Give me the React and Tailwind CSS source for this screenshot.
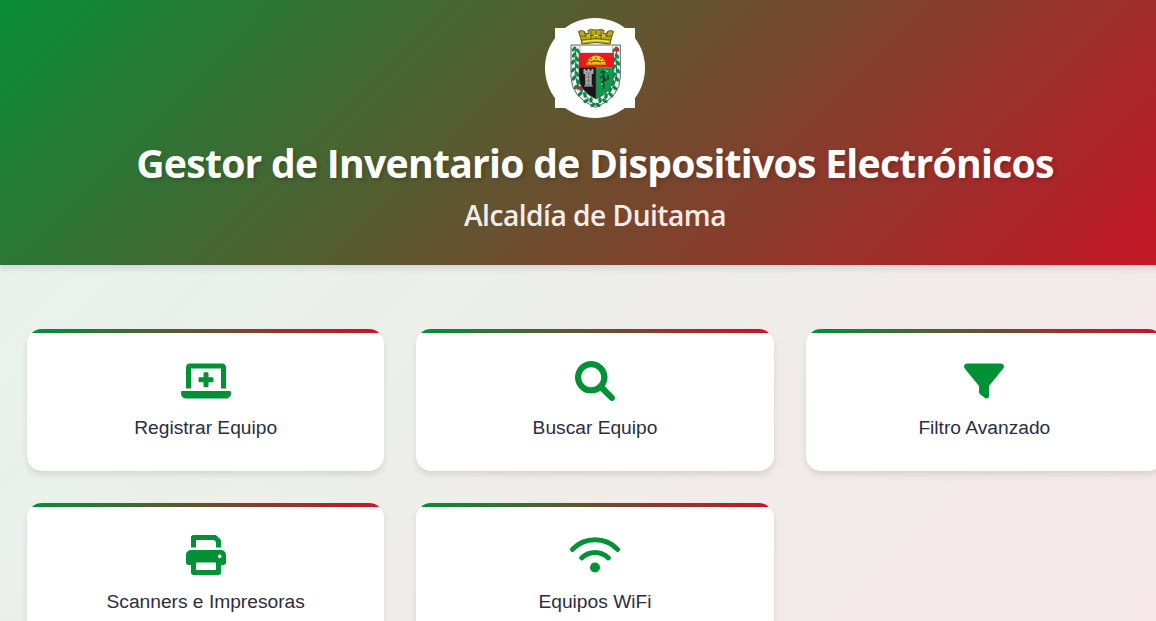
function IconLaptopMedical({ className }) {
  return (
    <svg viewBox="0 0 640 512" fill="currentColor" className={className}>
      <path d="M128 96h384v256h64V80c0-26.500-21.500-48-48-48H112C85.500 32 64 53.500 64 80v272h64V96zM624 384H16c-8.750 0-16 7.250-16 16v16c0 35.200 28.800 64 64 64h512c35.200 0 64-28.800 64-64v-16c0-8.750-7.250-16-16-16z" />
      <path d="M304 144h32c8.800 0 16 7.200 16 16v48h48c8.800 0 16 7.200 16 16v32c0 8.800-7.200 16-16 16h-48v48c0 8.800-7.200 16-16 16h-32c-8.800 0-16-7.200-16-16v-48h-48c-8.800 0-16-7.200-16-16v-32c0-8.800 7.200-16 16-16h48v-48c0-8.800 7.200-16 16-16z" />
    </svg>
  );
}

function IconSearch({ className }) {
  return (
    <svg viewBox="0 0 512 512" fill="currentColor" className={className}>
      <path d="M500.3 443.7l-119.7-119.7c27.22-40.41 40.65-90.9 33.46-144.7C401.8 87.79 326.8 13.32 235.2 1.723C99.01-15.51-15.51 99.01 1.724 235.2c11.6 91.64 86.08 166.7 177.6 178.9c53.8 7.189 104.3-6.236 144.7-33.46l119.7 119.7c15.62 15.62 40.95 15.62 56.57 0C515.9 484.7 515.9 459.3 500.3 443.7zM79.1 208c0-70.58 57.42-128 128-128s128 57.42 128 128c0 70.58-57.42 128-128 128S79.1 278.6 79.1 208z" />
    </svg>
  );
}

function IconFilter({ className }) {
  return (
    <svg viewBox="0 0 512 512" fill="currentColor" className={className}>
      <path d="M3.853 54.87C10.47 40.9 24.54 32 40 32H472C487.5 32 501.5 40.9 508.1 54.87C514.8 68.84 512.7 85.37 502.1 97.33L320 320.9V448C320 460.1 313.2 471.2 302.3 476.6C291.5 482 278.5 480.9 268.8 473.6L204.8 425.6C196.7 419.6 192 410.1 192 400V320.9L9.042 97.33C-.745 85.37-2.765 68.84 3.854 54.87z" />
    </svg>
  );
}

function IconPrint({ className }) {
  return (
    <svg viewBox="0 0 512 512" fill="currentColor" className={className}>
      <path d="M448 192H64C28.65 192 0 220.7 0 256v96c0 17.67 14.33 32 32 32h32v96c0 17.67 14.33 32 32 32h320c17.67 0 32-14.33 32-32v-96h32c17.67 0 32-14.33 32-32V256C512 220.7 483.3 192 448 192zM384 448H128v-96h256V448zM432 248c13.25 0 24 10.75 24 24c0 13.26-10.75 24-24 24S408 285.3 408 272C408 258.7 418.7 248 432 248zM128 64h229.5L384 90.51V160h64V77.25c0-8.484-3.375-16.62-9.375-22.62l-45.25-45.25C387.4 3.371 379.2 0 370.8 0H96C78.34 0 64 14.33 64 32v128h64V64z" />
    </svg>
  );
}

function IconWifi({ className }) {
  return (
    <svg viewBox="0 0 640 512" fill="none" stroke="currentColor" strokeWidth="64" strokeLinecap="round" className={className}>
      <path d="M32 184a400 400 0 0 1 576 0M150 293a246 246 0 0 1 340 0" />
      <circle cx="320" cy="416" r="64" fill="currentColor" stroke="none" />
    </svg>
  );
}

const actions = [
  { label: "Registrar Equipo", Icon: IconLaptopMedical, size: "h-10 w-[50px]" },
  { label: "Buscar Equipo", Icon: IconSearch, size: "size-10" },
  { label: "Filtro Avanzado", Icon: IconFilter, size: "size-10" },
  { label: "Scanners e Impresoras", Icon: IconPrint, size: "size-10" },
  { label: "Equipos WiFi", Icon: IconWifi, size: "h-10 w-[50px]" },
];

// Laurel leaves along the shield border: x, y, rotation
const leaves = [
  [19, 21, 40], [23, 23, -40], [19, 27, 30], [22, 31, -35], [18, 34, 35], [22, 38, -30],
  [18, 42, 40], [22, 46, -30], [19, 50, 35], [23, 54, -20], [21, 59, 45], [26, 61, -15],
  [25, 66, 50], [30, 67, -5], [31, 73, 60], [36, 72, 10], [38, 77, 60],
  [62, 21, -40], [58, 23, 40], [62, 28, -30], [59, 32, 35], [63, 35, -35], [59, 39, 30],
  [63, 43, -40], [59, 47, 30], [62, 51, -35], [58, 55, 20], [60, 60, -45], [55, 62, 15],
  [56, 67, -50], [51, 68, 5], [50, 73, -60], [45, 72, -10], [43, 77, -60],
];

function Emblem() {
  return (
    <svg viewBox="0 0 80 80" className="block size-20 bg-white" role="img">
      <path
        d="M23.5 3.500q3-2 6 0l.8 2.400 3.200-.6-.5-3q3.500-1.500 6.500-.4h3q3.500-1 6.500.4l-.5 3 3.200.6.8-2.400q3-2 6 0l-2 6-1.500 6.500q-14-3-28 0l-1.500-6.500z"
        fill="#b9aa1c" stroke="#4e4610" strokeWidth=".9"
      />
      <path d="M25 8.500q16-3 32 0M26.500 12q14.500-3 29 0M30 4v5M36 3v9M41 3v8M46 3v9M52 4v5" fill="none" stroke="#5f5714" strokeWidth=".8" />
      <path d="M28 13.700q13-2.300 26 0M32 8h3M39 7.500h4M47 8h3" fill="none" stroke="#eee23f" strokeWidth="1.400" />
      <path d="M16 17h49.300v32q0 20-24.650 30.500Q16 69 16 49z" fill="#e9f4ed" stroke="#666" strokeWidth="1" />
      {leaves.map(([x, y, r]) => (
        <ellipse key={`${x}-${y}`} cx={x} cy={y} rx="1.700" ry="2.900" fill="#14854a" transform={`rotate(${r} ${x} ${y})`} />
      ))}
      <path d="M20 20q2 9 .5 18t2 18q5 11 18 21M62 20q-2 9-.5 18t-2 18q-5 11-18 21" fill="none" stroke="#28734a" strokeWidth="1" />
      <path d="M25 17.500h32.500V25H25z" fill="#fff" stroke="#999" strokeWidth=".6" />
      <path d="M24 25h34.500v14.300H24z" fill="#ef1521" />
      <path d="M24 39.300h17V71Q24 63 24 49z" fill="#171719" />
      <path d="M41 39.300h17.500V49Q58.500 63 41 71z" fill="#12984b" />
      <path d="M24 25v24q0 14 17 22 17.500-8 17.500-22V25M41 39v32" fill="none" stroke="#4b554e" strokeWidth=".7" />
      <path d="M31.500 36q1.500-8 9.500-8.500 8 .5 9.500 8.500z" fill="#f7ce1c" />
      <path d="M33 33.500h16M35 31h3m2-1h2m3 1h3M36 35.200q5-6 10 0" fill="none" stroke="#76400d" strokeWidth="1.100" strokeDasharray="2 .8" />
      <path d="M31 36.300h20" stroke="#d59419" strokeWidth="1.300" />
      <path d="M28.500 41h2v1.500h2V41h2v1.500h2V41h2v5h-1.800v10.500l1.500 2h-9.500l1.500-2V46h-1.700z" fill="#a7aaa9" />
      <path d="M31 45h5M31.500 49h4M31.500 53h4M33.500 46v11M30 57h7" stroke="#555957" strokeWidth=".8" strokeDasharray="1.500 .7" />
      <path d="M48.500 43v18M45.500 45l2-2 3 1M45 50l3-2 3 4-4 2 2 3M53 47v5" fill="none" stroke="#163d29" strokeWidth="1.500" />
      <path d="M50 42.500l3 1M46 57l2-2" stroke="#b7d9c2" />
      <path d="M61 19l2.500 1 .5 2.500-2 1.500-2.500-1-.5-2zM22.500 57.500l3 1 .5 2-2.500 1.500-2-1z" fill="#d9202f" />
    </svg>
  );
}

function ActionCard({ label, Icon, size }) {
  return (
    <a className="relative flex h-[142px] flex-col items-center overflow-hidden rounded-[15px] bg-white pt-8 shadow-[0_4px_6px_rgba(0,0,0,0.1)]">
      <span className="absolute inset-x-0 top-0 h-1 bg-[linear-gradient(90deg,#009036,#ce1126)]" />
      <Icon className={`${size} shrink-0 text-[#009036]`} />
      <span className="mt-4 text-[19.2px] leading-[22px] text-[#2b2d42]">{label}</span>
    </a>
  );
}

export default function App() {
  return (
    <div className="h-screen w-full overflow-hidden font-['Liberation_Sans',Arial,sans-serif]">
      <div className="min-h-[700px] w-[1190px] bg-[linear-gradient(135deg,#e5f4eb_0%,#f7e7e8_100%)]">
        <header className="relative flex h-[265px] flex-col items-center bg-[linear-gradient(135deg,#078d38,#c91426)] pt-[18px] text-white shadow-[0_4px_6px_rgba(0,0,0,0.1)]">
          <div className="flex size-[100px] items-center justify-center rounded-full bg-white">
            <Emblem />
          </div>
          <h1 className="mt-[19px] whitespace-nowrap font-['Open_Sans','Noto_Sans',sans-serif] text-[39.2px] leading-[52px] font-bold tracking-[-0.77px] [text-shadow:2px_2px_4px_rgba(0,0,0,0.2)]">
            Gestor de Inventario de Dispositivos Electrónicos
          </h1>
          <h2 className="mt-[7px] whitespace-nowrap font-['Open_Sans','Noto_Sans',sans-serif] text-[28.2px] leading-[38px] font-semibold tracking-[-0.53px] opacity-90">
            Alcaldía de Duitama
          </h2>
        </header>
        <main className="grid grid-cols-3 gap-8 px-[27px] pt-16">
          {actions.map((action) => (
            <ActionCard key={action.label} {...action} />
          ))}
        </main>
      </div>
    </div>
  );
}
